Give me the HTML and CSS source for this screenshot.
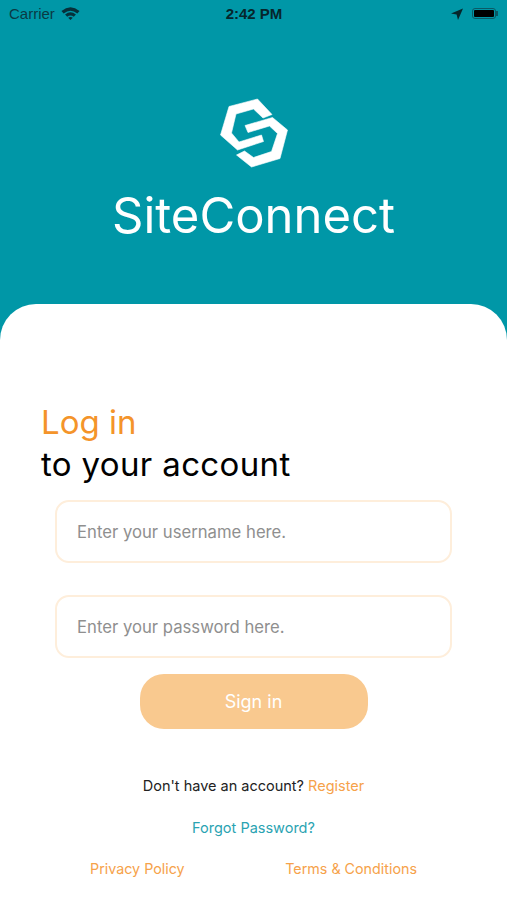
FILE: index.html
```html
<!doctype html>
<html lang="en">
<head>
    <meta charset="UTF-8">
    <title>SiteConnect</title>
    <link rel="stylesheet" href="styles.css">
</head>
<body>
<div class="statusbar">
    <div class="status-left">
        <span>Carrier</span>
        <svg class="wifi" viewBox="0 0 20 14" width="19" height="14">
            <path d="M0.500 4.800 Q10 -3 19.500 4.800 L17.200 7.500 Q10 1.800 2.800 7.500Z" fill="#06303a"/>
            <path d="M4.300 8.700 Q10 3.800 15.700 8.700 L13.500 11 Q10 8.200 6.500 11Z" fill="#06303a"/>
            <path d="M7.600 12 Q10 10.200 12.400 12 L10 14.400Z" fill="#06303a"/>
        </svg>
    </div>
    <div class="status-time">2:42 PM</div>
    <div class="status-right">
        <svg viewBox="0 0 12 12" width="12" height="12">
            <path d="M12 0.5 L7 12 L5.600 6.600 L0 5.400Z" fill="#06262c"/>
        </svg>
        <div class="battery"><div class="battery-fill"></div></div>
    </div>
</div>

<div class="header">
    <svg class="logo" viewBox="0 0 110 95" width="110" height="95">
        <path fill="#fff" stroke="#fff" stroke-width="0.6" stroke-linejoin="round" d="M57.5 14 L72 29.5 L63 33 L53.500 24 L36 29 L31.500 48 L39 57 L61.500 50 L63.500 56.500 L37.500 65 L20.500 50 L29 21.500Z"/>
        <path fill="#fff" stroke="#fff" stroke-width="0.6" stroke-linejoin="round" d="M45 40.500 L72.500 32.500 L87.500 45 L80 73.500 L51.500 82 L36.500 70 L44.500 66 L53.500 72.500 L71.500 66.500 L77.500 48.500 L69.500 41 L48 47.500Z"/>
    </svg>
    <h1 class="brand">SiteConnect</h1>
</div>

<div class="card">
    <h2 class="title"><span class="title-orange">Log in</span><br>to your account</h2>
    <div class="form">
        <input class="field" type="text" placeholder="Enter your username here.">
        <input class="field" type="password" placeholder="Enter your password here.">
        <button class="signin">Sign in</button>
    </div>
    <p class="line">Don't have an account? <a class="orange">Register</a></p>
    <p class="line forgot">Forgot Password?</p>
    <div class="bottom-links">
        <a class="orange">Privacy Policy</a>
        <a class="orange">Terms &amp; Conditions</a>
    </div>
</div>
</body>
</html>
```

FILE: styles.css
```css
*{
    margin: 0;
    padding: 0;
    box-sizing: border-box;
}
html,body{
    height: 100%;
}
body{
    display: flex;
    flex-direction: column;
    background: #0097a7;
    font-family: "Inter", "Liberation Sans", sans-serif;
    overflow: hidden;
}
.statusbar{
    height: 27px;
    padding: 0 8px 0 9px;
    display: grid;
    grid-template-columns: 1fr auto 1fr;
    align-items: center;
    font-family: "Liberation Sans", sans-serif;
    font-size: 15px;
    color: #0a3a44;
}
.status-left{
    display: flex;
    align-items: center;
    gap: 6px;
}
.wifi{
    margin-top: -2px;
}
.status-time{
    font-weight: bold;
    color: #06262c;
}
.status-right{
    display: flex;
    justify-content: flex-end;
    align-items: center;
    gap: 9px;
    padding-right: 3px;
}
.battery{
    position: relative;
    width: 24px;
    height: 11px;
    padding: 1px;
    border: 1px solid #0a5a66;
    border-radius: 3px;
}
.battery::after{
    content: "";
    position: absolute;
    top: 2px;
    right: -3px;
    width: 2px;
    height: 5px;
    background: #0a5a66;
}
.battery-fill{
    height: 100%;
    background: #000;
    border-radius: 1px;
}
.header{
    height: 277px;
    display: flex;
    flex-direction: column;
    align-items: center;
    padding-top: 58px;
}
.logo{
    display: block;
    margin-left: 3px;
}
.brand{
    margin-top: 8px;
    font-size: 49px;
    line-height: 56px;
    font-weight: 400;
    color: #fff;
}
.card{
    flex: 1;
    background: #fff;
    border-radius: 36px 36px 0 0;
    padding-top: 97px;
}
.title{
    margin-left: 41px;
    font-size: 33px;
    line-height: 42px;
    font-weight: 400;
    letter-spacing: 0.35px;
    color: #000;
}
.title-orange{
    color: #f4942a;
    letter-spacing: 0;
}
.form{
    display: flex;
    flex-direction: column;
    align-items: center;
    margin-top: 15px;
}
.field{
    width: 397px;
    height: 63px;
    margin-bottom: 32px;
    padding: 0 20px;
    border: 2px solid #feeedb;
    border-radius: 14px;
    background: #fff;
    outline: none;
    font-family: inherit;
    font-size: 16.7px;
}
.field::placeholder{
    color: #8f8f8f;
    opacity: 1;
}
.field:nth-child(2){
    margin-bottom: 16px;
}
.signin{
    width: 228px;
    height: 55px;
    border: none;
    border-radius: 24px;
    background: #f9c98f;
    color: #fff;
    font-family: inherit;
    font-size: 18px;
}
.line{
    margin-top: 23px;
    text-align: center;
    font-size: 14.500px;
    line-height: 20px;
    color: #222;
}
.card .form + .line{
    margin-top: 47px;
}
.orange{
    color: #f6a24a;
}
.forgot{
    color: #2aa3b2;
    margin-top: 22px;
}
.bottom-links{
    display: flex;
    margin-top: 21px;
    padding: 0 90px;
    justify-content: space-between;
    font-size: 14.300px;
    line-height: 20px;
}
```
